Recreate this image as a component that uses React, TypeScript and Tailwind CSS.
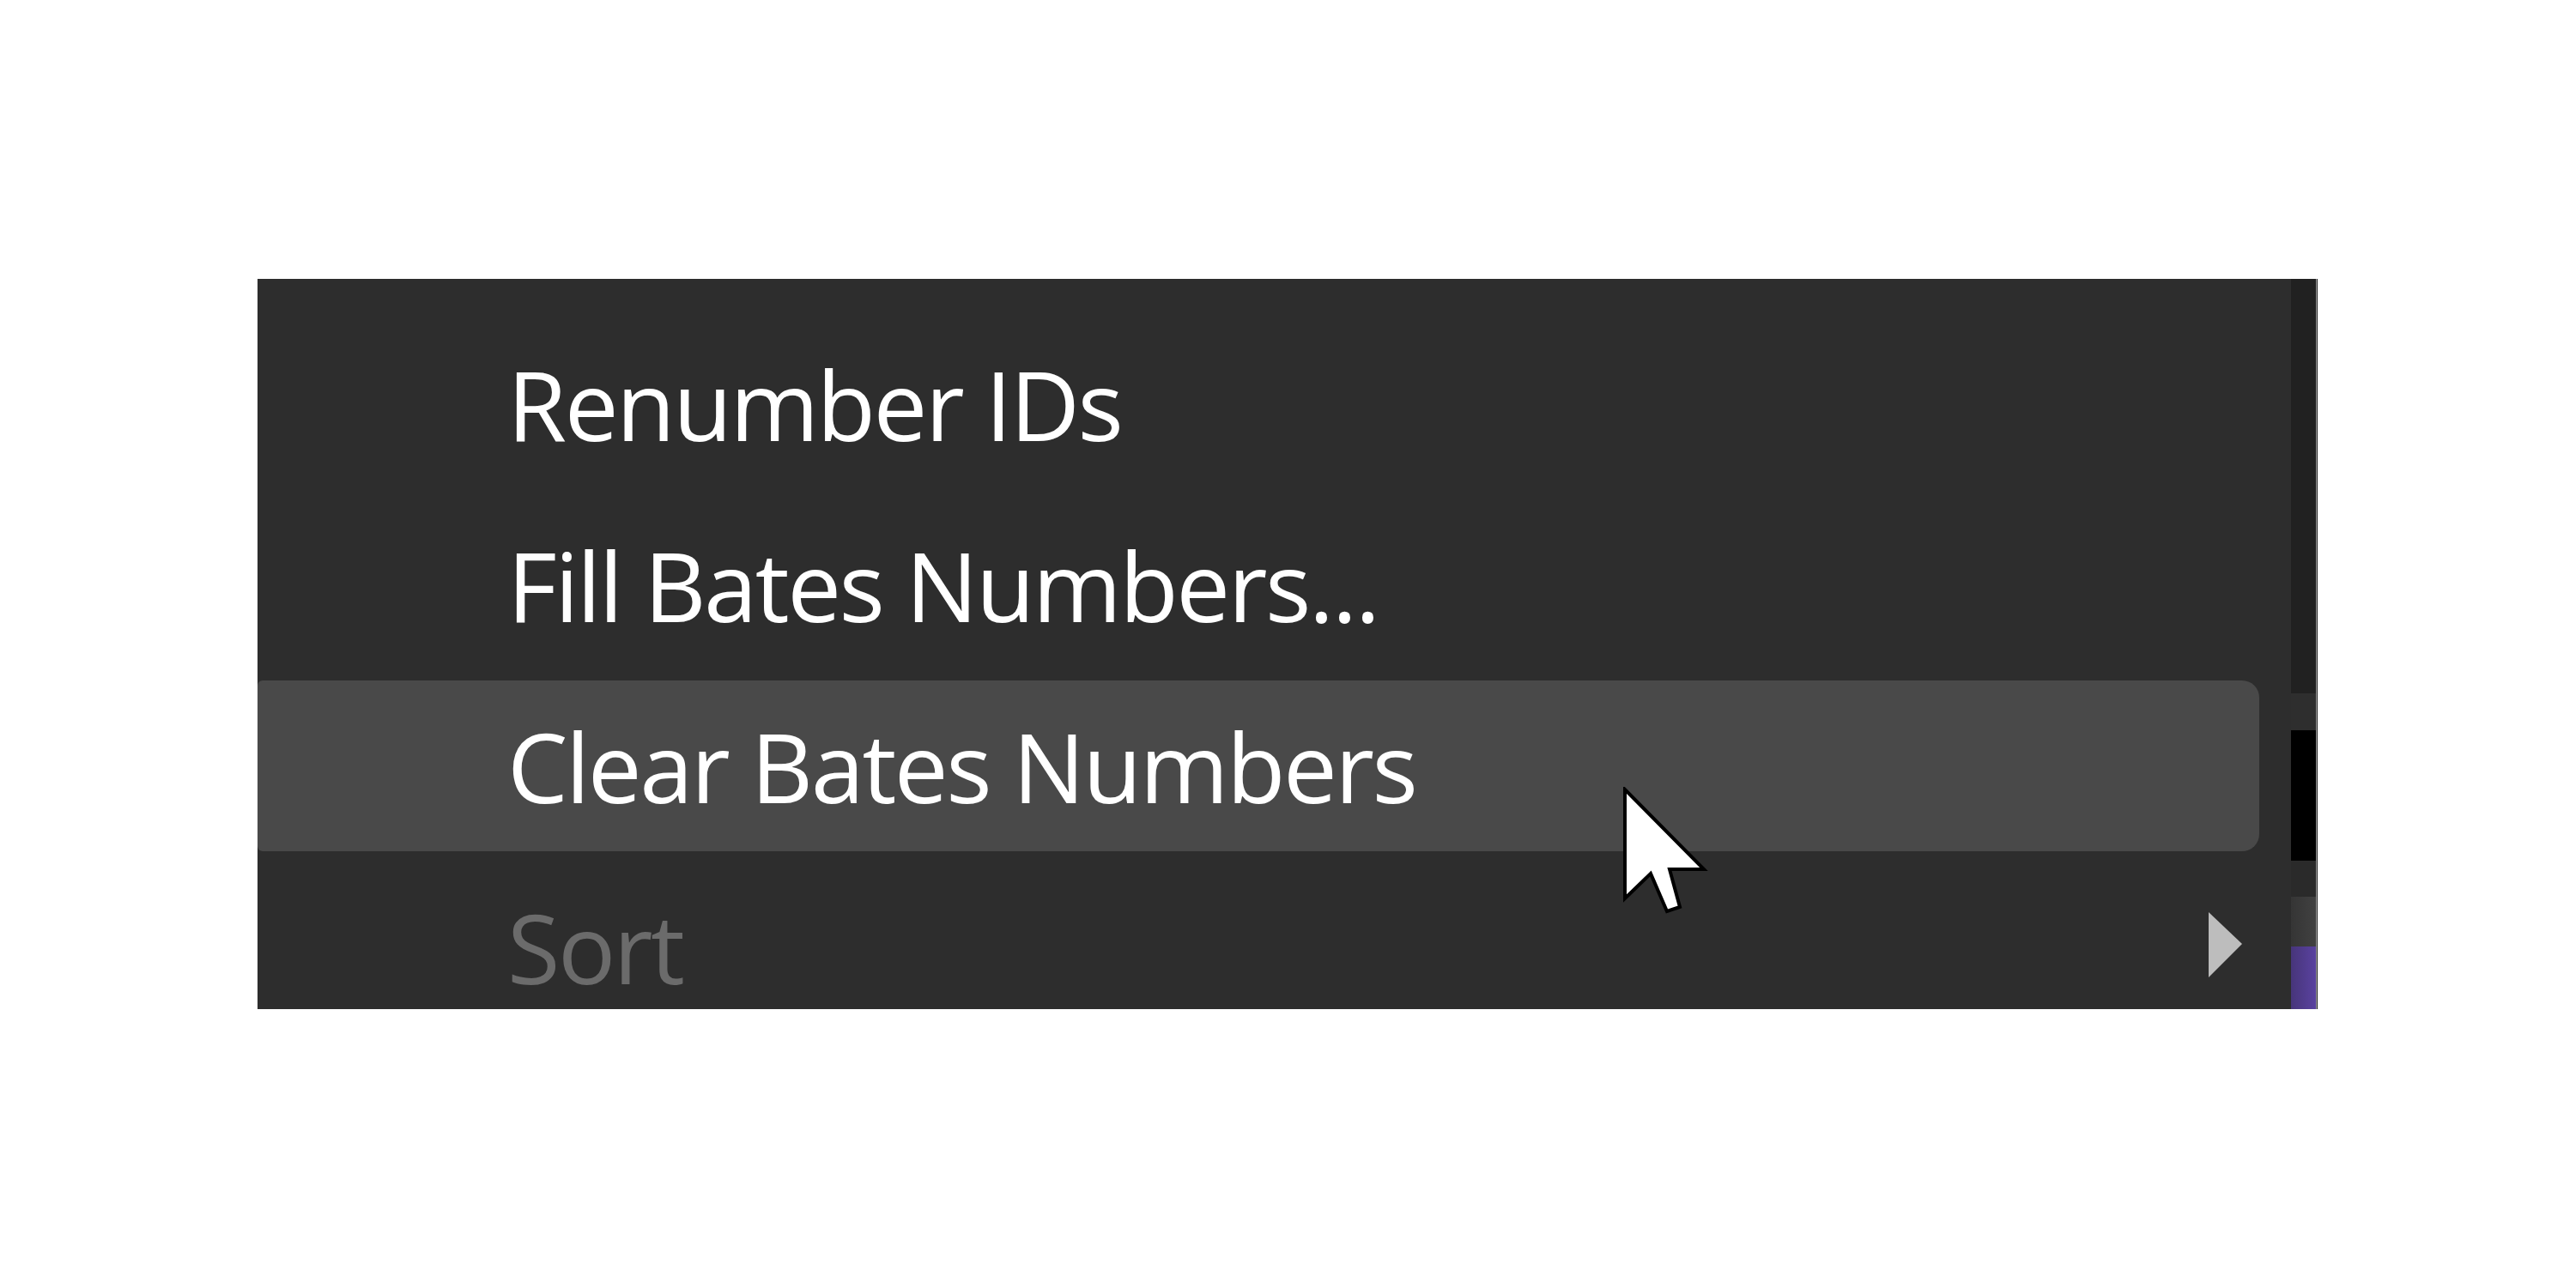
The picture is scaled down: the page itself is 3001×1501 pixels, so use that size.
import React from "react";

function Cursor() {
  return (
    <svg
      className="absolute left-[1890px] top-[917px]"
      width="100"
      height="150"
      viewBox="-3 -3 100 150"
    >
      <polygon
        points="0,0 0,127 30,98 49,142 64,137 52,93 92,93"
        fill="#ffffff"
        stroke="#000000"
        strokeWidth="4"
        strokeLinejoin="miter"
      />
    </svg>
  );
}

function Row({
  label,
  highlighted,
  disabled,
  submenu,
}: {
  label: string;
  highlighted?: boolean;
  disabled?: boolean;
  submenu?: boolean;
}) {
  return (
    <div className="h-[211px] py-[6px] shrink-0">
      <div
        className={
          "h-full flex items-center justify-between pl-[291px] pr-[20px] rounded-r-[20px] rounded-l-[6px] " +
          (highlighted ? "bg-[#494949]" : "")
        }
      >
        <span
          className={
            "text-[112px] leading-none font-[450] tracking-[-2.5px] whitespace-nowrap " +
            (disabled ? "text-[#6b6b6b]" : "text-[#ffffff]")
          }
        >
          {label}
        </span>
        {submenu && (
          <svg width="39" height="76" viewBox="0 0 39 76" className="mt-[-6px]">
            <polygon points="0,0 39,37 0,76" fill="#bdbdbd" />
          </svg>
        )}
      </div>
    </div>
  );
}

export default function App() {
  return (
    <div
      className="relative w-[3001px] h-[1501px] bg-white overflow-hidden pt-[325px] pl-[300px]"
      style={{ fontFamily: '"Open Sans", "Noto Sans", sans-serif' }}
    >
      <div className="flex w-[2400px] h-[851px] overflow-hidden bg-[#2d2d2d]">
        <div className="flex flex-col w-[2369px] pt-[40px] pr-[37px]">
          <Row label="Renumber IDs" />
          <Row label="Fill Bates Numbers..." />
          <Row label="Clear Bates Numbers" highlighted />
          <Row label="Sort" disabled submenu />
        </div>
        <div className="flex flex-col w-[30px] border-r border-[#9a9a9a]">
          <div className="h-[483px] bg-[#212121]" />
          <div className="h-[43px] bg-[#2e2e2e]" />
          <div className="h-[152px] bg-[#000000]" />
          <div className="h-[42px] bg-[#2a2a2a]" />
          <div className="h-[58px] bg-gradient-to-r from-[#353535] to-[#414141]" />
          <div className="flex-1 bg-gradient-to-r from-[#47357a] to-[#5a42a0]" />
        </div>
      </div>
      <Cursor />
    </div>
  );
}
